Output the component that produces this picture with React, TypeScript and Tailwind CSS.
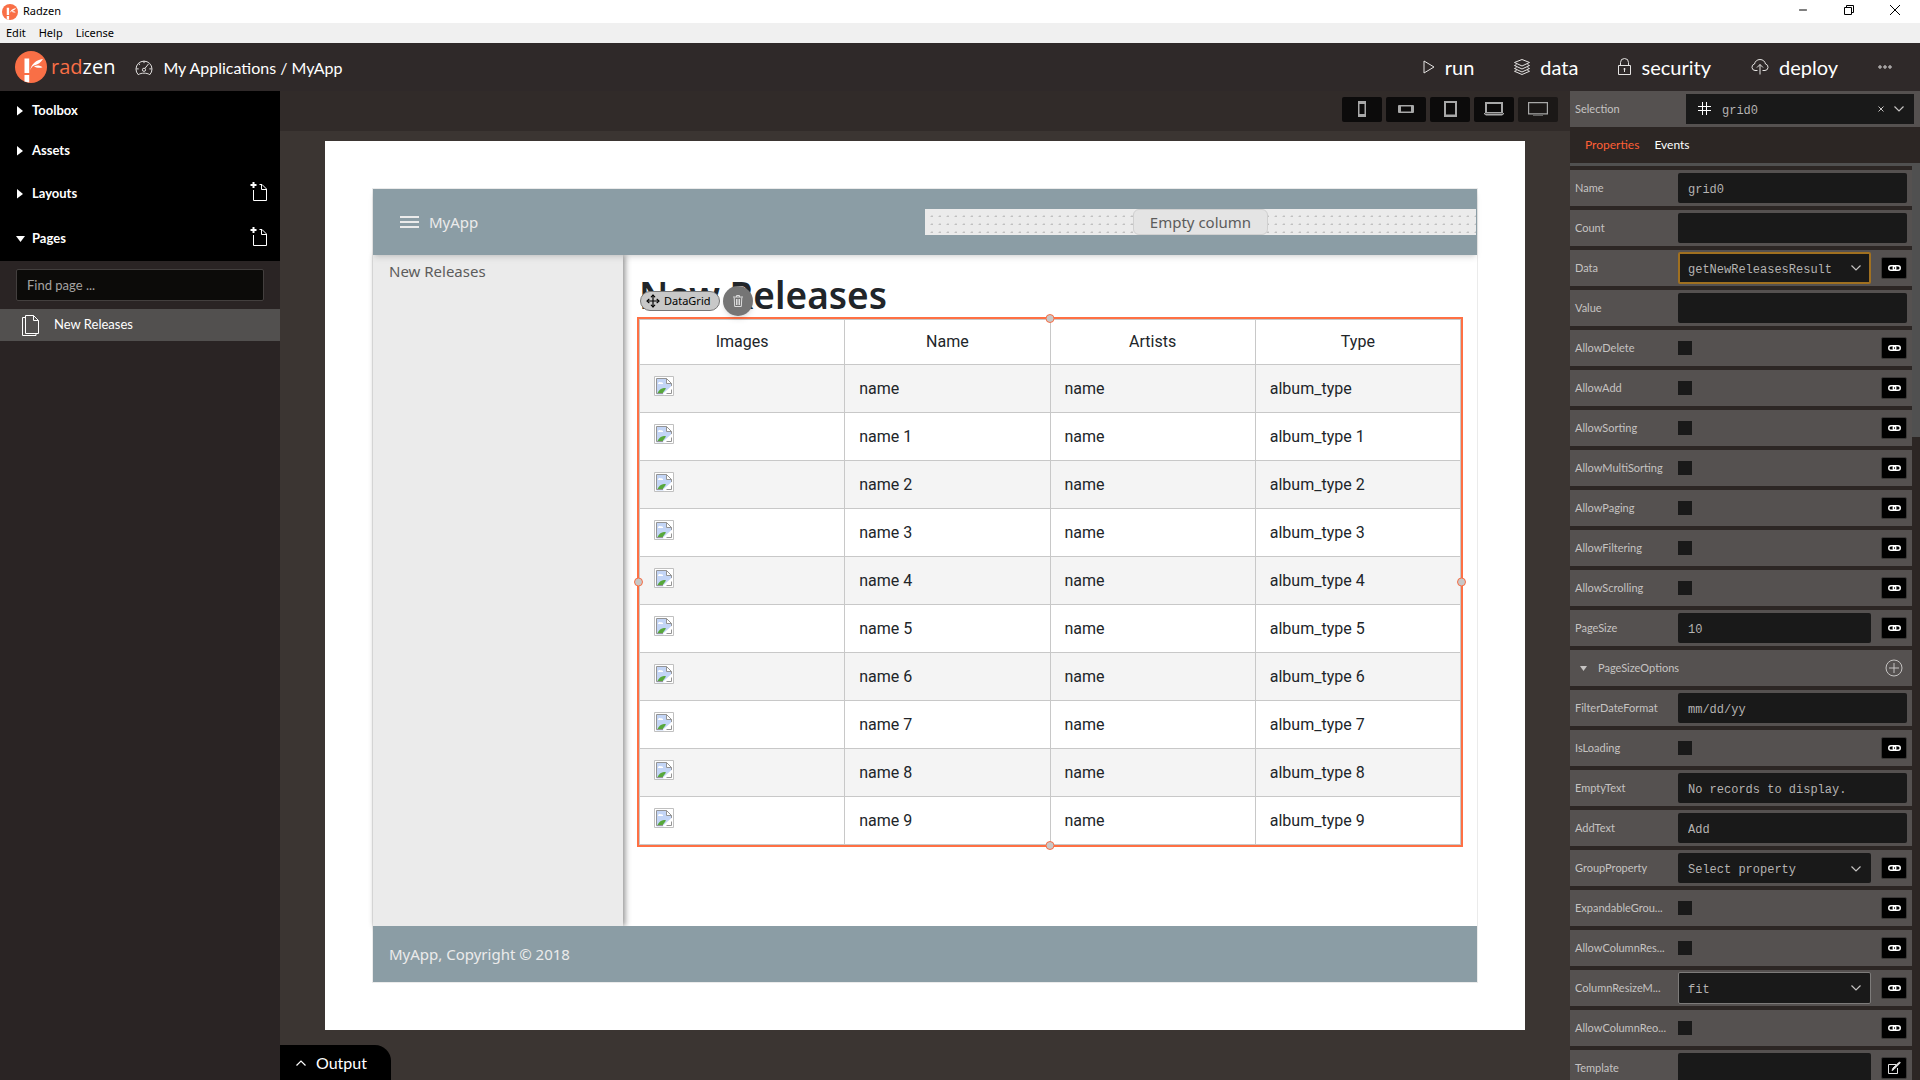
import { useState } from "react";
import clsx from "clsx";
import { Minus, Move } from "lucide-react";

const ui = "font-['Lato',sans-serif]";
const mono = "font-['Liberation_Mono',monospace]";
const system = "font-['Noto_Sans',sans-serif]";

type Field = {
  name: string;
  label?: string;
  kind: "text" | "select" | "check" | "group" | "template";
  value?: string;
  link?: boolean;
  active?: boolean;
  outlined?: boolean;
};

const fields: Field[] = [
  { name: "Name", kind: "text", value: "grid0" },
  { name: "Count", kind: "text", value: "" },
  { name: "Data", kind: "select", value: "getNewReleasesResult", link: true, active: true },
  { name: "Value", kind: "text", value: "" },
  { name: "AllowDelete", kind: "check", link: true },
  { name: "AllowAdd", kind: "check", link: true },
  { name: "AllowSorting", kind: "check", link: true },
  { name: "AllowMultiSorting", kind: "check", link: true },
  { name: "AllowPaging", kind: "check", link: true },
  { name: "AllowFiltering", kind: "check", link: true },
  { name: "AllowScrolling", kind: "check", link: true },
  { name: "PageSize", kind: "text", value: "10", link: true },
  { name: "PageSizeOptions", kind: "group" },
  { name: "FilterDateFormat", kind: "text", value: "mm/dd/yy" },
  { name: "IsLoading", kind: "check", link: true },
  { name: "EmptyText", kind: "text", value: "No records to display." },
  { name: "AddText", kind: "text", value: "Add" },
  { name: "GroupProperty", kind: "select", value: "Select property", link: true },
  { name: "ExpandableGroups", label: "ExpandableGrou...", kind: "check", link: true },
  { name: "AllowColumnResize", label: "AllowColumnRes...", kind: "check", link: true },
  { name: "ColumnResizeMode", label: "ColumnResizeM...", kind: "select", value: "fit", link: true, outlined: true },
  { name: "AllowColumnReorder", label: "AllowColumnReo...", kind: "check", link: true },
  { name: "Template", kind: "template", value: "" },
];

const rows = Array.from({ length: 10 }, (_, i) => (i === 0 ? "" : ` ${i}`));

const LogoMark = ({ className }: { className: string }) => (
  <svg viewBox="0 0 32 32" className={className} aria-hidden="true">
    <circle cx="16" cy="16" r="16" fill="#f96f46" />
    <path d="M9.500 7.500h4.700V22H9.500zM9.500 24h4.700v7.500l-4.700-1z" fill="#fff" />
    <path d="M15 19.500C16.500 13 21 9 28 8c-2 3.500-5 5.500-9 6.500-2 1-3 2.500-4 5z" fill="#fff" />
    <path d="M19 15.300c3-1.300 6-1 8.500 1-3 1-6 .7-8.500-1z" fill="#fff" />
  </svg>
);

const GaugeIcon = () => (
  <svg viewBox="0 0 20 18" className="w-[18px] h-4" fill="none" stroke="#e5e3e2" strokeWidth="1.100" aria-hidden="true">
    <path d="M3.500 16.500A9 9 0 1 1 16.500 16.500c-2-1.200-4-1.700-6.500-1.700s-4.500.5-6.500 1.700z" />
    <path d="M10 1v2.500M1.500 10H4M16 10h2.500M4 4l1.500 1.500M11 9.500l4-5" />
    <circle cx="10" cy="11" r="1.800" />
  </svg>
);

const AddPageIcon = () => (
  <svg viewBox="0 0 17 20" className="w-[17px] h-5" fill="none" stroke="#fff" aria-hidden="true">
    <path d="M3.500 8v10.500h13V7L12 2.500H9.500M11.500 3v4.500h5" />
    <path d="M3.500 0v6M.5 3h6" strokeWidth="2" />
  </svg>
);

const PagesIcon = () => (
  <svg viewBox="0 0 17 21" className="w-[17px] h-[21px]" fill="none" stroke="#fff" aria-hidden="true">
    <path d="M3.500.5h8l5 5v13h-13zM11.500.5v5h5" />
    <path d="M3 2.500H.5v18H14V19" />
  </svg>
);

const LinkIcon = () => (
  <svg viewBox="0 0 13 7" className="w-[13px] h-[7px]" fill="none" stroke="#fff" strokeWidth="1.500" aria-hidden="true">
    <rect x=".75" y=".75" width="7" height="4.500" rx="2.250" />
    <rect x="5.250" y=".75" width="7" height="4.500" rx="2.250" />
  </svg>
);

const EditIcon = () => (
  <svg viewBox="0 0 14 14" className="w-[14px] h-[14px]" fill="none" stroke="#e5e5e5" aria-hidden="true">
    <path d="M9 3.500H1.500v9h9V7" />
    <path d="M5 9.500l1-2.500 6.500-6 .8.8-6.300 6.500z" fill="#e5e5e5" />
  </svg>
);

const Chevron = ({ className, up }: { className?: string; up?: boolean }) => (
  <svg viewBox="0 0 10 6" className={clsx("w-2.5 h-1.5 pointer-events-none", className)} fill="none" stroke="currentColor" strokeWidth="1.200" aria-hidden="true">
    {up ? <path d="M.5 5.500L5 1l4.500 4.500" /> : <path d="M.5.5L5 5 9.500.5" />}
  </svg>
);

const BrokenImage = () => (
  <svg viewBox="0 0 20 20" className="w-5 h-5" role="img" aria-label="missing image">
    <path d="M.5.5h19v19H.5z" fill="#fff" stroke="#c0c0c0" />
    <path d="M2.500 2.500h10l5 5v4l-7 7h-8z" fill="#c3d5f6" />
    <path d="M4 8c0-2 2-2.500 2.800-1.500C8 6 9.500 7 9 8z" fill="#fff" />
    <path d="M3 18c2-5 6-7 9-5.500L8 18z" fill="#57a83b" />
    <path d="M17.500 10.500v-3l-5-5h-10v15H9" fill="none" stroke="#949494" />
    <path d="M12.500 2.500v5h5z" fill="#fff" stroke="#949494" />
    <path d="M9.500 18.500l9-8" stroke="#fff" strokeWidth="2" />
    <path d="M12.500 17.500h5v-4" fill="none" stroke="#949494" />
  </svg>
);

const tools = [
  {
    name: "run",
    box: "0 0 12 14",
    size: "w-3 h-[14px]",
    icon: <path d="M1 1v12l10-6z" />,
  },
  {
    name: "data",
    box: "0 0 16 16",
    size: "w-4 h-4",
    icon: <path d="M8 .5l7.500 3L8 7 .5 3.500zM2.500 5.700L.5 6.500 8 10l7.500-3.500-2-.8M2.500 8.700l-2 .8L8 13l7.500-3.500-2-.8M2.500 11.500l-2 .8 7.500 3.200 7.500-3.200-2-.8" />,
  },
  {
    name: "security",
    box: "0 0 13 18",
    size: "w-[13px] h-[18px]",
    icon: <path d="M.5 7.500h12v9H.5zM2.500 7.500V4.500a4 4 0 0 1 8 0v3M6.500 10v4M5.500 11h2" />,
  },
  {
    name: "deploy",
    box: "0 0 18 16",
    size: "w-[18px] h-4",
    icon: <path d="M6.500 11.500H4a3.300 3.300 0 0 1-.5-6.500C4 2.500 6 .5 9 .5s5 2 5.500 4.500a3.300 3.300 0 0 1-.5 6.500h-2.500M9 15.500V5.500M6 8.500l3-3 3 3" />,
  },
];

const devices = [
  {
    name: "Phone portrait",
    icon: <path fillRule="evenodd" d="M8 2h8v16H8zM9.500 5v10h5V5z" />,
  },
  {
    name: "Phone landscape",
    icon: <path fillRule="evenodd" d="M5 6h14a1 1 0 0 1 1 1v6a1 1 0 0 1-1 1H5a1 1 0 0 1-1-1V7a1 1 0 0 1 1-1zM7 7.500v5h10v-5z" />,
  },
  {
    name: "Tablet",
    icon: <path fillRule="evenodd" d="M6 2h13v16H6zM8 4v11.500h9V4z" />,
  },
  {
    name: "Laptop",
    icon: <path fillRule="evenodd" d="M3 3h18v11.500H3zM5 5v8h14V5zM2 14h20v1l-2 1.500H4L2 15z" />,
  },
  {
    name: "Desktop",
    icon: <path fillRule="evenodd" d="M2 3h20v12.500H2zM3.200 4.200v10h17.600v-10zM7 15h10v1.500H7z" />,
  },
];

const TitleBar = () => (
  <div className={`${system} text-[11px] text-black`}>
    <div className="flex items-center justify-between h-[23px] bg-white">
      <div className="flex items-center gap-[5px] pl-0.5">
        <LogoMark className="w-4 h-4" />
        <span>Radzen</span>
      </div>
      <div className="flex self-start pr-0.5">
        <button className="w-[46px] h-5 flex items-center justify-center" aria-label="Minimize">
          <Minus className="w-3 h-3" strokeWidth={2} />
        </button>
        <button className="w-[46px] h-5 flex items-center justify-center" aria-label="Restore">
          <svg viewBox="0 0 10 10" className="w-2.5 h-2.5" fill="none" stroke="#000">
            <path d="M.5 2.500h7v7h-7zM2.500 2.500v-2h7v7h-2" />
          </svg>
        </button>
        <button className="w-[46px] h-5 flex items-center justify-center" aria-label="Close">
          <svg viewBox="0 0 10 10" className="w-2.5 h-2.5" fill="none" stroke="#000">
            <path d="M0 0l10 10M10 0L0 10" />
          </svg>
        </button>
      </div>
    </div>
    <nav className="flex items-center gap-[13px] h-5 pl-1.5 bg-[#f0f0f0]">
      <button>Edit</button>
      <button>Help</button>
      <button>License</button>
    </nav>
  </div>
);

const Header = () => (
  <header className="flex items-center justify-between h-12 bg-[#2f2929] text-white">
    <div className="flex items-center pl-[15px]">
      <a href="#home" className="flex items-center gap-1">
        <LogoMark className="w-8 h-8" />
        <span className="font-['Open_Sans',sans-serif] text-xl leading-6 font-medium">
          <span className="text-[#f96f46]">rad</span>zen
        </span>
      </a>
      <a href="#apps" className="flex items-center gap-2.5 ml-5 pt-0.5 text-base">
        <GaugeIcon />
        <span>My Applications / MyApp</span>
      </a>
    </div>
    <nav className="flex items-center gap-10 pr-7">
      {tools.map((tool) => (
        <button key={tool.name} className="flex items-center gap-2.5 text-xl">
          <svg viewBox={tool.box} className={tool.size} fill="none" stroke="#e5e3e2" aria-hidden="true">
            {tool.icon}
          </svg>
          <span>{tool.name}</span>
        </button>
      ))}
      <button aria-label="More">
        <svg viewBox="0 0 14 4" className="w-[14px] h-1" fill="none" stroke="#e5e3e2">
          <circle cx="2" cy="2" r="1.200" />
          <circle cx="7" cy="2" r="1.200" />
          <circle cx="12" cy="2" r="1.200" />
        </svg>
      </button>
    </nav>
  </header>
);

const SidebarItem = ({ label, open, add }: { label: string; open?: boolean; add?: boolean }) => (
  <div className={clsx("flex items-center justify-between pl-4 pr-[13px]", add ? "h-[45px]" : "h-10")}>
    <button className="flex items-center text-[13px] font-bold" aria-expanded={!!open}>
      <svg viewBox="0 0 10 10" className="w-2.5 h-2.5 mr-1.5" fill="#fff" aria-hidden="true">
        {open ? <path d="M0 2h9L4.500 8z" /> : <path d="M1 0v9.500L7 5z" />}
      </svg>
      {label}
    </button>
    {add && (
      <button aria-label={`Add to ${label}`} className="pb-1">
        <AddPageIcon />
      </button>
    )}
  </div>
);

const Sidebar = () => (
  <aside className="w-[280px] shrink-0 bg-[#2a2424] text-white">
    <div className="bg-black">
      <SidebarItem label="Toolbox" />
      <SidebarItem label="Assets" />
      <SidebarItem label="Layouts" add />
      <SidebarItem label="Pages" open add />
    </div>
    <div className="px-4 py-2">
      <input
        type="text"
        placeholder="Find page ..."
        aria-label="Find page"
        className="block w-full h-8 px-2.5 rounded-xs border border-[#433f3e] bg-[#0c0b09] text-[13px] placeholder:text-[#a5a3a2]"
      />
    </div>
    <a href="#new-releases" className="flex items-center gap-[15px] h-8 pl-[22px] bg-[#52504f] text-[13px]">
      <PagesIcon />
      <span>New Releases</span>
    </a>
  </aside>
);

const handle = "absolute w-[9px] h-[9px] rounded-full border border-[#f96f46] bg-[#c8c8c8]";

const DataGrid = () => (
  <div className="relative border-2 border-[#ff7044]">
    <table className="w-full table-fixed border-collapse font-['Roboto',sans-serif] text-base text-[#212529]">
      <thead>
        <tr className="h-[45px]">
          {["Images", "Name", "Artists", "Type"].map((title) => (
            <th key={title} className="border border-[#c8c8c8] font-normal">
              {title}
            </th>
          ))}
        </tr>
      </thead>
      <tbody>
        {rows.map((suffix, i) => (
          <tr key={i} className="h-12 odd:bg-[#f4f4f4]">
            <td className="border border-[#c8c8c8] px-[14px] pb-1.5">
              <BrokenImage />
            </td>
            <td className="border border-[#c8c8c8] px-[14px]">name{suffix}</td>
            <td className="border border-[#c8c8c8] px-[14px]">name</td>
            <td className="border border-[#c8c8c8] px-[14px]">album_type{suffix}</td>
          </tr>
        ))}
      </tbody>
    </table>

    {/* resize handles */}
    <span className={clsx(handle, "-top-[5px] left-1/2 -translate-x-1/2")} />
    <span className={clsx(handle, "-bottom-[5px] left-1/2 -translate-x-1/2")} />
    <span className={clsx(handle, "top-1/2 -left-[5px] -translate-y-1/2")} />
    <span className={clsx(handle, "top-1/2 -right-[5px] -translate-y-1/2")} />

    {/* floating toolbar of the selected component */}
    <div className="absolute -top-[33px] left-px flex items-center gap-[3px]">
      <button className={`${system} flex items-center gap-1 h-5 px-[5px] pr-2 rounded-full border border-[#777] bg-[#c8c8c8] text-[11px] text-black`}>
        <Move className="w-[14px] h-[14px]" />
        DataGrid
      </button>
      <button className="flex items-center justify-center w-[30px] h-[30px] rounded-full bg-[#757575] shadow-md" aria-label="Delete">
        <svg viewBox="0 0 10 12" className="w-2.5 h-3" fill="none" stroke="#dcdcdc" aria-hidden="true">
          <path d="M0 2h10M3.500 2V.5h3V2M1.200 2.500l.5 9h6.600l.5-9M3.500 4v6M5 4v6M6.500 4v6" />
        </svg>
      </button>
    </div>
  </div>
);

const Canvas = () => (
  <div className="flex-1 px-[45px] pt-2.5 pb-[50px] bg-[#3b3532]">
    <div className={`h-full p-[47px] bg-white ${system}`}>
      <div className="flex flex-col h-full border border-[#ebebeb] text-[15px]">
        <div className="relative z-10 flex items-center h-[66px] bg-[#8b9da5] text-[#ebebeb] shadow-md">
          <div className="flex items-center w-1/2 pl-[27px] gap-2.5">
            <button aria-label="Toggle menu">
              <svg viewBox="0 0 19 12" className="w-[19px] h-3" fill="#ebebeb">
                <path d="M0 0h19v2H0zM0 5h19v2H0zM0 10h19v2H0z" />
              </svg>
            </button>
            <span>MyApp</span>
          </div>
          <div className="flex justify-center flex-1 h-[26px] mr-px bg-[#ebebeb] bg-[radial-gradient(circle_at_7px_8px,#c0c0c0_1px,transparent_2px)] bg-[length:8px_8px]">
            <span className="flex items-center px-4 rounded-md border border-[#d0d0d0] bg-[#e4e4e4] text-[#5c5c5c]">
              Empty column
            </span>
          </div>
        </div>

        <div className="flex flex-1">
          <nav className="w-[250px] pl-4 pt-[5px] bg-[#ebebeb] text-[#5c5c5c] shadow-[2px_0_6px_rgba(0,0,0,0.45)]">
            <a href="#new-releases">New Releases</a>
          </nav>
          <main className="flex-1 px-[14px] pt-[18px]">
            <h1 className="pl-0.5 text-[37px] leading-[44px] font-semibold text-[#212529]">New Releases</h1>
            <DataGrid />
          </main>
        </div>

        <footer className="relative z-10 flex items-center h-14 pl-4 bg-[#8b9da5] text-[#ebebeb]">
          MyApp, Copyright © 2018
        </footer>
      </div>
    </div>
  </div>
);

const Workspace = () => {
  const [device, setDevice] = useState("Desktop");

  return (
    <section className="relative flex flex-col flex-1 min-w-0">
      <div className="flex items-center justify-end gap-1 h-10 pr-3 pb-1 bg-[#312b29]">
        {devices.map((item) => (
          <button
            key={item.name}
            aria-label={item.name}
            onClick={() => setDevice(item.name)}
            className={clsx(
              "flex items-center justify-center w-10 h-[25px] rounded-xs",
              device === item.name ? "bg-[#1b1817]" : "bg-[#0c0b0b]"
            )}
          >
            <svg viewBox="0 0 24 20" className="w-6 h-5" fill="#a8a8a8" aria-hidden="true">
              {item.icon}
            </svg>
          </button>
        ))}
      </div>
      <Canvas />
      <button className="absolute left-0 bottom-0 flex items-center gap-2.5 h-[35px] pl-4 pr-6 rounded-tr-2xl bg-black text-white text-base">
        <Chevron up />
        Output
      </button>
    </section>
  );
};

const FieldRow = ({ field }: { field: Field }) => {
  const id = `field-${field.name}`;

  if (field.kind === "group") {
    return (
      <div className="flex items-center justify-between shrink-0 h-9 pl-2.5 pr-[9px] bg-[#555150]">
        <button className="flex items-center gap-[11px]" aria-expanded="true">
          <svg viewBox="0 0 7 5" className="w-[7px] h-[5px]" fill="#c5c3c2" aria-hidden="true">
            <path d="M0 0h7L3.500 5z" />
          </svg>
          {field.name}
        </button>
        <button aria-label="Add option">
          <svg viewBox="0 0 18 18" className="w-[18px] h-[18px]" fill="none" stroke="#c5c3c2">
            <circle cx="9" cy="9" r="8" />
            <path d="M9 4v10M4 9h10" />
          </svg>
        </button>
      </div>
    );
  }

  return (
    <div className="flex items-center shrink-0 h-9 px-[5px] bg-[#555150]">
      <label htmlFor={id} className="w-[103px] shrink-0 whitespace-nowrap">
        {field.label ?? field.name}
      </label>
      {(field.kind === "text" || field.kind === "template") && (
        <input
          id={id}
          type="text"
          defaultValue={field.value}
          className={`${mono} flex-1 min-w-0 h-[30px] px-2.5 pt-1 rounded-xs bg-[#191919] text-xs text-[#b5b3b2]`}
        />
      )}
      {field.kind === "select" && (
        <div className="relative flex-1 min-w-0">
          <select
            id={id}
            className={clsx(
              mono,
              "block w-full appearance-none pt-1 rounded-xs bg-[#191919] text-xs text-[#b5b3b2]",
              field.active && "h-8 px-2 border-2 border-[#a07020]",
              field.outlined && "h-8 px-[9px] border border-[#7d7b7a]",
              !field.active && !field.outlined && "h-[30px] px-2.5"
            )}
          >
            <option>{field.value}</option>
          </select>
          <Chevron className="absolute right-2.5 top-[13px]" />
        </div>
      )}
      {field.kind === "check" && (
        <div className="flex-1 flex">
          <input id={id} type="checkbox" className="w-[14px] h-[14px] appearance-none bg-[#191919]" />
        </div>
      )}
      {(field.link || field.kind === "template") && (
        <button
          className="flex items-center justify-center w-[26px] h-[22px] ml-2.5 rounded-xs border border-[#3b3938] bg-black"
          aria-label={field.link ? `Bind ${field.name}` : `Edit ${field.name}`}
        >
          {field.link ? <LinkIcon /> : <EditIcon />}
        </button>
      )}
    </div>
  );
};

const PropertyPanel = () => (
  <aside className="flex flex-col w-[350px] shrink-0 bg-[#2c2624] text-[11px] text-[#c5c3c2]">
    <div className="flex items-center h-9 pl-[5px] pr-1.5 bg-[#555150]">
      <label htmlFor="selection" className="w-[111px]">
        Selection
      </label>
      <div className="relative flex-1">
        <select
          id="selection"
          className={`${mono} block w-full h-[30px] pl-9 pt-1 appearance-none bg-[#191919] text-xs text-[#b5b3b2]`}
        >
          <option>grid0</option>
        </select>
        <svg viewBox="0 0 13 13" className="absolute left-3 top-2 w-[13px] h-[13px] pointer-events-none" fill="none" stroke="#fff" aria-hidden="true">
          <path d="M4.500 0v13M8.500 0v13M0 4.500h13M0 8.500h13" />
        </svg>
        <svg viewBox="0 0 6 6" className="absolute right-[30px] top-3 w-1.5 h-1.5 pointer-events-none" fill="none" stroke="currentColor" aria-hidden="true">
          <path d="M.5.5l5 5M5.500.5l-5 5" />
        </svg>
        <Chevron className="absolute right-2.5 top-3" />
      </div>
    </div>
    <div className="flex items-center gap-[15px] h-9 pl-[15px] text-xs">
      <button className="text-[#ff5f35]">Properties</button>
      <button className="text-white">Events</button>
    </div>
    <div className="flex flex-1 min-h-0 border-t-3 border-[#505050]">
      <div className="flex flex-col flex-1 gap-1 pt-1 overflow-hidden">
        {fields.map((field) => (
          <FieldRow key={field.name} field={field} />
        ))}
      </div>
      <div className="w-2">
        <div className="h-[271px] bg-[#505050]" />
      </div>
    </div>
  </aside>
);

const App = () => (
  <div className={`flex flex-col h-screen overflow-hidden ${ui}`}>
    <TitleBar />
    <Header />
    <div className="flex flex-1 min-h-0">
      <Sidebar />
      <Workspace />
      <PropertyPanel />
    </div>
  </div>
);

export default App;
